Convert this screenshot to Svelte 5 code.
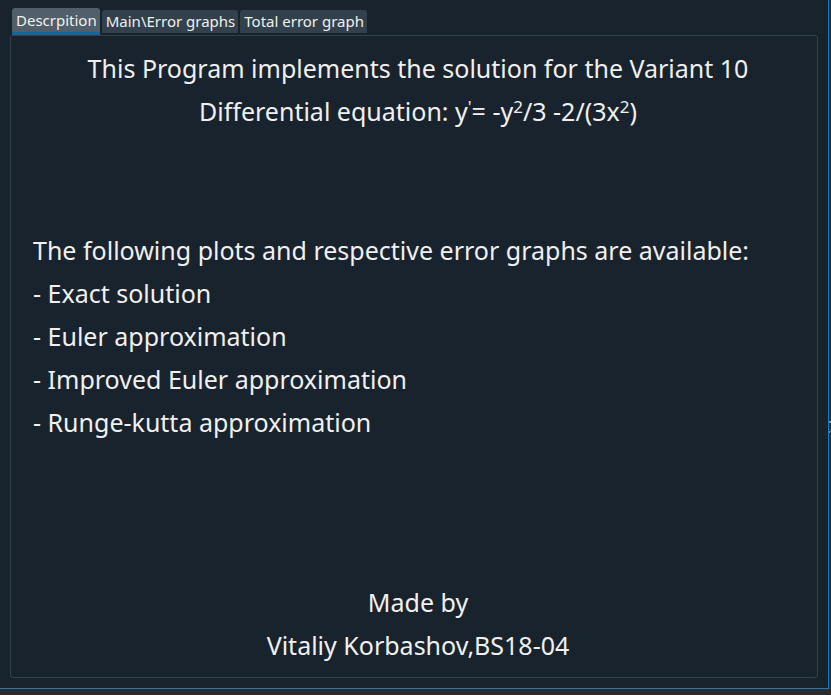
<script>
  const tabs = ['Descrpition', 'Main\\Error graphs', 'Total error graph'];
  const plots = ['Exact solution', 'Euler approximation', 'Improved Euler approximation', 'Runge-kutta approximation'];
  let active = $state(0);
</script>

<div class="desktop">
  <div class="window">
    <div class="tabs" role="tablist">
      {#each tabs as tab, i}
        <button
          type="button"
          role="tab"
          class:active={active === i}
          aria-selected={active === i}
          onclick={() => (active = i)}>{tab}</button>
      {/each}
    </div>
    <main class="pane" role="tabpanel">
      <div class="centered top">
        <p>This Program implements the solution for the Variant 10</p>
        <p>Differential equation: y<sup>'</sup>= -y<sup>2</sup>/3 -2/(3x<sup>2</sup>)</p>
      </div>
      <div class="plots">
        <p>The following plots and respective error graphs are available:</p>
        {#each plots as plot}
          <p>- {plot}</p>
        {/each}
      </div>
      <div class="centered author">
        <p>Made by</p>
        <p>Vitaliy Korbashov,BS18-04</p>
      </div>
    </main>
  </div>
  <div class="edge">
    <svg width="2" height="12" viewBox="0 0 2 12" aria-hidden="true">
      <path d="M0 0h2v2h-2zM1 9h1v1h-1v2h-1v-2h1z" fill="#8a8a8a" />
    </svg>
  </div>
</div>

<style>
  .desktop {
    box-sizing: border-box;
    min-height: 100vh;
    display: grid;
    grid-template-columns: 1fr 2px;
    padding-bottom: 6px;
    background: #2b2b2b;
    font-family: 'Noto Sans', Tahoma, 'DejaVu Sans', sans-serif;
    color: #f0f0f0;
  }
  .window {
    display: flex;
    flex-direction: column;
    padding: 8px 10px 10px;
    background: #19232d;
    border-right: 1px solid #1f78c0;
    border-bottom: 1px solid #1f78c0;
  }
  .tabs {
    display: flex;
    align-items: flex-start;
    gap: 2px;
    height: 27px;
    padding-left: 2px;
  }
  button {
    height: 23px;
    margin: 2px 0 0;
    padding: 0 3px 0 4px;
    border: 0;
    border-radius: 3px 3px 0 0;
    background: #32414b;
    color: inherit;
    font: inherit;
    font-size: 15px;
    line-height: 23px;
    white-space: nowrap;
  }
  button.active {
    height: 27px;
    margin-top: 0;
    border-bottom: 3px solid #1464a0;
    background: #505f69;
    line-height: 24px;
  }
  .pane {
    flex: 1;
    display: grid;
    grid-template-rows: auto 7fr auto 10fr auto;
    padding: 11px 14px 10px 22px;
    border: 1px solid #32414b;
    border-radius: 3px;
    font-size: 25px;
    line-height: 43px;
  }
  .centered {
    text-align: center;
  }
  .plots {
    grid-row: 3;
  }
  .author {
    grid-row: 5;
  }
  p {
    margin: 0;
  }
  sup {
    font-size: 17px;
    line-height: 0;
    vertical-align: 8px;
  }
  .edge {
    display: grid;
    grid-template-rows: 421fr auto 256fr;
  }
  .edge svg {
    grid-row: 2;
  }
</style>
